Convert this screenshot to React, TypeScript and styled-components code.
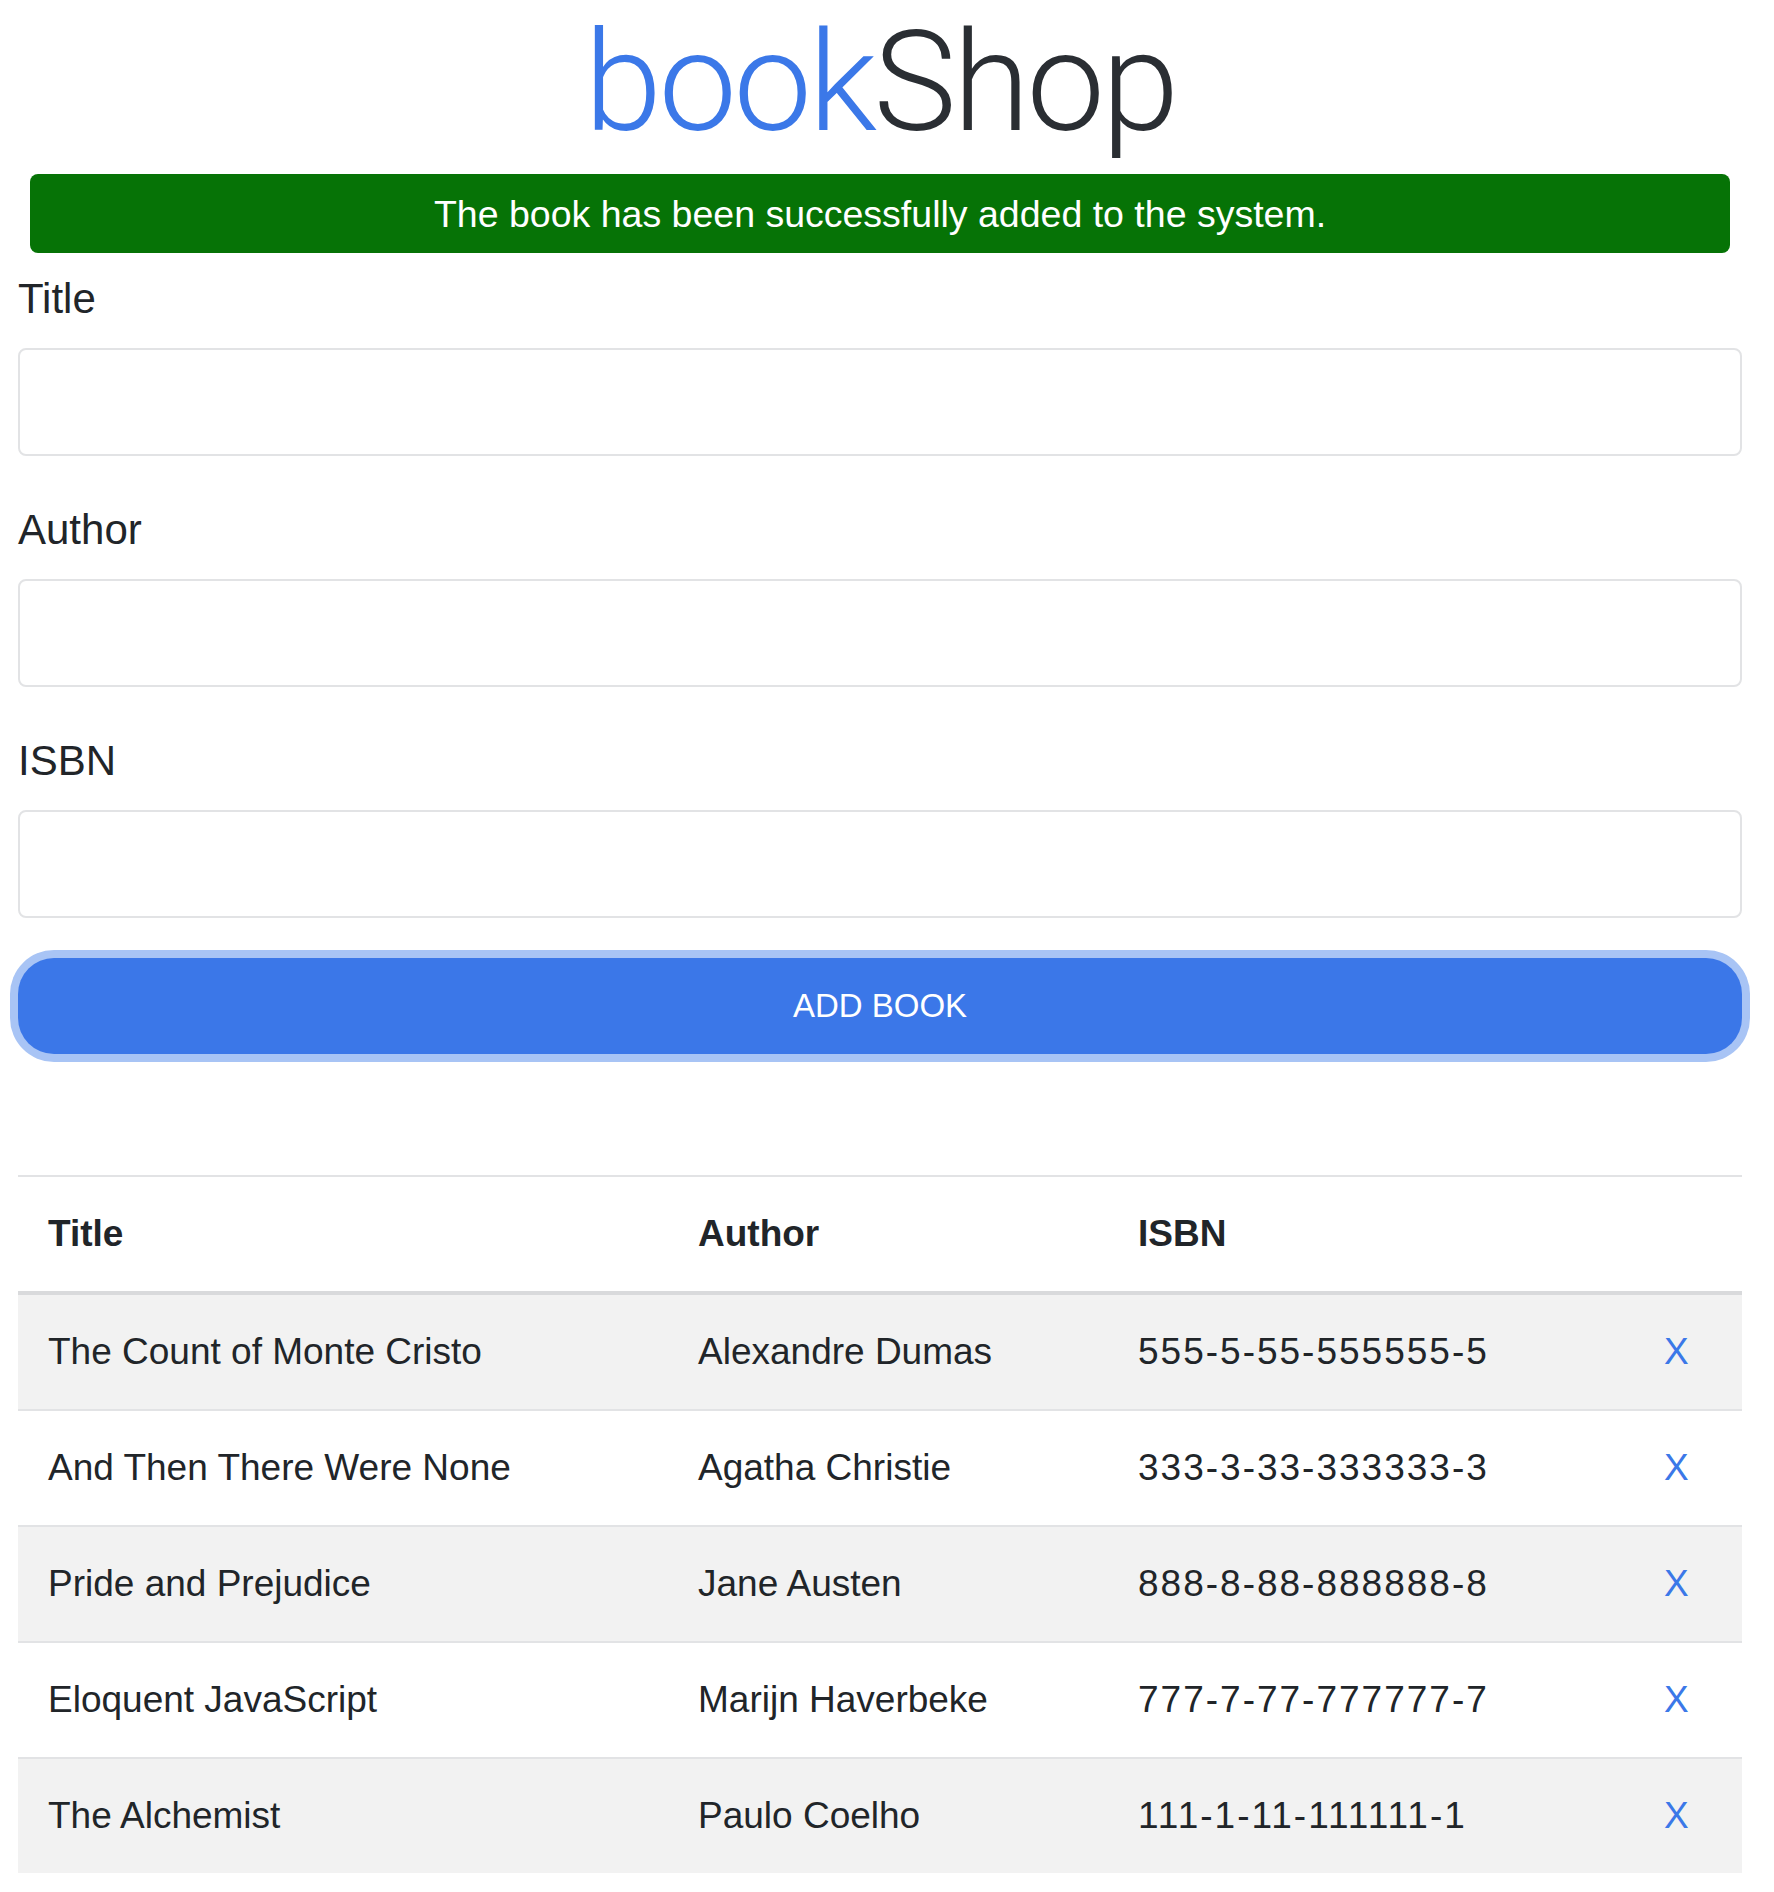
import React from "react";
import styled, { createGlobalStyle } from "styled-components";

const GlobalStyle = createGlobalStyle`
  html, body {
    margin: 0;
    padding: 0;
    background: #ffffff;
  }
  body {
    font-family: "Liberation Sans", Arial, sans-serif;
    color: #212529;
  }
  * { box-sizing: border-box; }
`;

const Page = styled.div`
  padding: 0 32px 19px 18px;
`;

const Heading = styled.h1`
  margin: 0;
  padding-top: 8px;
  height: 156px;
  font-family: Roboto, "Liberation Sans", sans-serif;
  font-weight: 300;
  font-size: 140px;
  line-height: 148px;
  letter-spacing: -3.5px;
  text-align: center;
  color: #2a2e33;
`;

const Brand = styled.span<{ $tone: "blue" | "dark" }>`
  color: ${(p) => (p.$tone === "blue" ? "#3b78e8" : "#2a2e33")};
`;

const Alert = styled.div`
  margin: 18px 12px 0;
  height: 79px;
  border-radius: 8px;
  background: #067306;
  color: #ffffff;
  font-size: 37.5px;
  line-height: 42px;
  display: flex;
  align-items: center;
  justify-content: center;
`;

const Form = styled.form`
  margin-top: 22px;
  display: flex;
  flex-direction: column;
`;

const FormGroup = styled.div`
  display: flex;
  flex-direction: column;
  margin-bottom: 50px;
  &:last-of-type {
    margin-bottom: 0;
  }
`;

const Label = styled.label`
  font-size: 42px;
  line-height: 47px;
  margin-bottom: 26px;
  color: #212529;
`;

const Input = styled.input`
  width: 100%;
  height: 108px;
  border: 2px solid #e2e3e5;
  border-radius: 8px;
  background: #ffffff;
  font-family: inherit;
  font-size: 37px;
  padding: 0 24px;
  outline: none;
`;

const SubmitButton = styled.button`
  margin-top: 40px;
  width: 100%;
  height: 96px;
  border: none;
  border-radius: 36px;
  background: #3b77e8;
  box-shadow: 0 0 0 8px #a8c4f5;
  color: #ffffff;
  font-family: inherit;
  font-size: 33px;
  line-height: 38px;
  cursor: pointer;
`;

const Table = styled.div`
  margin-top: 121px;
  display: flex;
  flex-direction: column;
`;

const Row = styled.div<{ $striped?: boolean; $head?: boolean; $first?: boolean }>`
  display: grid;
  grid-template-columns: 650px 440px 526px 108px;
  height: ${(p) => (p.$head ? 120 : p.$first ? 114 : 116)}px;
  border-top: ${(p) => (p.$first ? "none" : "2px solid #e2e3e5")};
  border-bottom: ${(p) => (p.$head ? "4px solid #d9dadc" : "none")};
  background: ${(p) => (p.$striped ? "#f2f2f2" : "#ffffff")};
`;

const Cell = styled.div<{ $head?: boolean; $spaced?: boolean }>`
  display: flex;
  align-items: center;
  padding-left: 30px;
  font-size: 37px;
  line-height: 42px;
  font-weight: ${(p) => (p.$head ? 700 : 400)};
  letter-spacing: ${(p) => (p.$spaced ? "2px" : "normal")};
  color: #212529;
  white-space: nowrap;
`;

const RemoveLink = styled.a`
  color: #3b78e8;
  text-decoration: none;
  font-size: 37px;
  cursor: pointer;
`;

const books = [
  { title: "The Count of Monte Cristo", author: "Alexandre Dumas", isbn: "555-5-55-555555-5" },
  { title: "And Then There Were None", author: "Agatha Christie", isbn: "333-3-33-333333-3" },
  { title: "Pride and Prejudice", author: "Jane Austen", isbn: "888-8-88-888888-8" },
  { title: "Eloquent JavaScript", author: "Marijn Haverbeke", isbn: "777-7-77-777777-7" },
  { title: "The Alchemist", author: "Paulo Coelho", isbn: "111-1-11-111111-1" },
];

export default function App() {
  return (
    <>
      <GlobalStyle />
      <Page>
        <Heading>
          <Brand $tone="blue">book</Brand>
          <Brand $tone="dark">Shop</Brand>
        </Heading>
        <Alert>The book has been successfully added to the system.</Alert>
        <Form onSubmit={(e) => e.preventDefault()}>
          <FormGroup>
            <Label htmlFor="title">Title</Label>
            <Input id="title" type="text" />
          </FormGroup>
          <FormGroup>
            <Label htmlFor="author">Author</Label>
            <Input id="author" type="text" />
          </FormGroup>
          <FormGroup>
            <Label htmlFor="isbn">ISBN</Label>
            <Input id="isbn" type="text" />
          </FormGroup>
          <SubmitButton type="submit">ADD BOOK</SubmitButton>
        </Form>
        <Table role="table">
          <Row $head role="row">
            <Cell $head role="columnheader">Title</Cell>
            <Cell $head role="columnheader">Author</Cell>
            <Cell $head role="columnheader">ISBN</Cell>
            <Cell $head role="columnheader" />
          </Row>
          {books.map((b, i) => (
            <Row key={b.isbn} role="row" $striped={i % 2 === 0} $first={i === 0}>
              <Cell role="cell">{b.title}</Cell>
              <Cell role="cell">{b.author}</Cell>
              <Cell role="cell" $spaced>{b.isbn}</Cell>
              <Cell role="cell">
                <RemoveLink>X</RemoveLink>
              </Cell>
            </Row>
          ))}
        </Table>
      </Page>
    </>
  );
}
